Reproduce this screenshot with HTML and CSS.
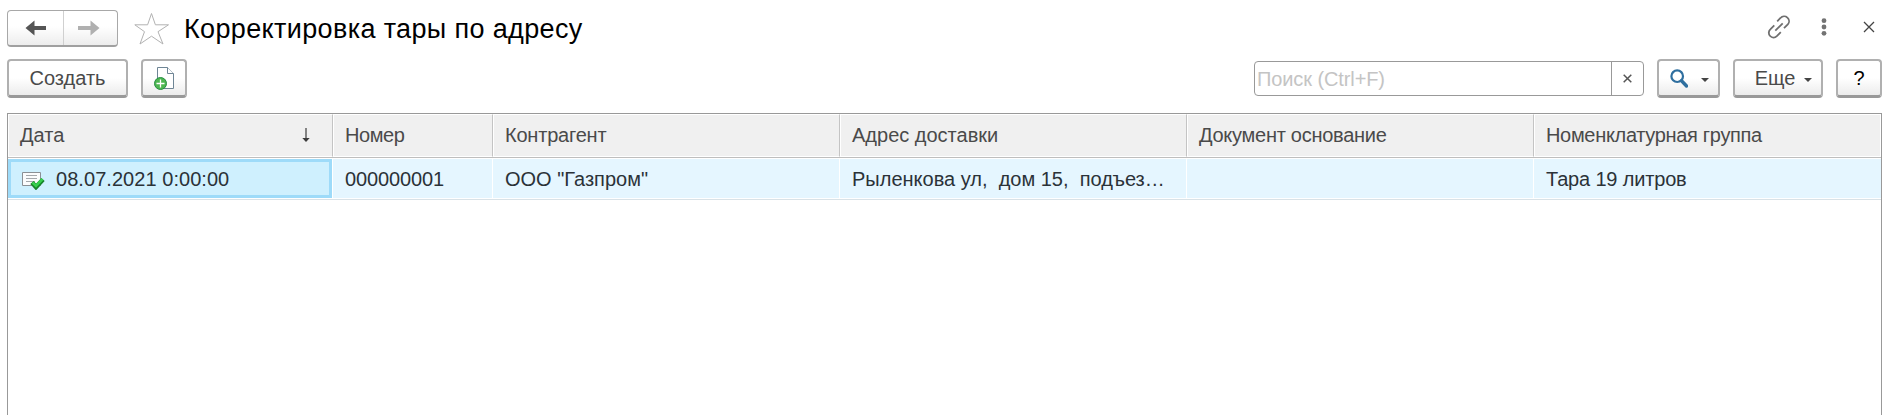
FILE: index.html
```html
<!DOCTYPE html>
<html lang="ru">
<head>
<meta charset="utf-8">
<title>Корректировка тары по адресу</title>
<link rel="stylesheet" href="styles.css">
</head>
<body>
<main class="window">
  <header class="titlebar">
    <div class="nav">
      <button class="nav-btn nav-prev" aria-label="Назад"><svg width="22" height="16" viewBox="0 0 22 16"><path d="M0.500 8 9.500 .5V6H21v4H9.500V15.500Z" fill="#555"/></svg></button>
      <button class="nav-btn nav-next" aria-label="Вперед"><svg width="22" height="16" viewBox="0 0 22 16"><path d="M21.500 8 12.500 .5V6H0v4H12.500V15.500Z" fill="#b0b0b0"/></svg></button>
    </div>
    <svg class="star" width="36" height="34" viewBox="0 0 36 34"><path d="M17.500 1.500 21.400 12.800H34.500L24 19.700 29 32 17.500 24.200 6 32 10.500 19.700.8 12.800H13.600Z" fill="#fff" stroke="#b2b2b2"/></svg>
    <h1 class="title">Корректировка тары по адресу</h1>
    <div class="window-tools">
      <svg class="link" width="24" height="24" viewBox="0 0 24 24" fill="none" stroke="#6f6f6f" stroke-width="1.800"><path d="M10.200 6.300 13.500 3A4.700 4.700 0 0 1 20.800 9.500L17 13.200M7.300 10.300 3.300 14.300A4.700 4.700 0 0 0 9.800 21.200L13.800 17.200M8.300 15.700 15.700 8.300"/></svg>
      <svg class="dots" width="6" height="18" viewBox="0 0 6 18" fill="#737373"><circle cx="3" cy="2.700" r="2.400"/><circle cx="3" cy="9" r="2.400"/><circle cx="3" cy="15.300" r="2.400"/></svg>
      <svg class="close" width="12" height="12" viewBox="0 0 12 12" stroke="#444" stroke-width="1.300"><path d="M1 1 11 11M11 1 1 11"/></svg>
    </div>
  </header>
  <div class="toolbar">
    <button class="btn create">Создать</button>
    <button class="btn copy" aria-label="Скопировать"><svg width="22" height="24" viewBox="0 0 22 24"><path d="M4.500 1.500H14.500L20.500 7.500V22.500H4.500Z" fill="#fff" stroke="#6e8595"/><path d="M14.500 1.500V7.500H20.500" fill="#fff" stroke="#6e8595"/><circle cx="7.500" cy="17.500" r="6" fill="#4db651" stroke="#268f42"/><path d="M7.500 13.500V21.500M3.500 17.500H11.500" stroke="#fff" stroke-width="1.300"/></svg></button>
    <div class="search">
      <span class="search-input">Поиск (Ctrl+F)</span>
      <span class="search-clear"><svg width="9" height="9" viewBox="0 0 9 9" stroke="#555" stroke-width="1.500"><path d="M.7.7 8.300 8.300M8.300.7.7 8.300"/></svg></span>
    </div>
    <button class="btn find" aria-label="Найти"><svg width="18" height="19" viewBox="0 0 18 19" fill="none" stroke="#2f6f9f"><circle cx="7.200" cy="7.200" r="5.800" stroke-width="2.200"/><path d="M11.500 11.800 16.500 17" stroke-width="3.400" stroke-linecap="round"/></svg><i class="caret"></i></button>
    <button class="btn more"><span>Еще</span><i class="caret"></i></button>
    <button class="btn help">?</button>
  </div>
  <section class="grid">
    <div class="row head">
      <div class="cell"><span>Дата</span><svg class="sort" width="8" height="15" viewBox="0 0 8 15"><path d="M4 0V12" stroke="#3c3c3c" stroke-width="1.200"/><path d="M.3 10H7.700L4 14Z" fill="#3c3c3c"/></svg></div>
      <div class="cell h-num"><span>Номер</span></div>
      <div class="cell h-org"><span>Контрагент</span></div>
      <div class="cell"><span>Адрес доставки</span></div>
      <div class="cell h-base"><span>Документ основание</span></div>
      <div class="cell h-group"><span>Номенклатурная группа</span></div>
    </div>
    <div class="row data">
      <div class="cell active"><svg class="doc" width="23" height="19" viewBox="0 0 23 19"><path d="M.5 1.500H18.500V14.500H.5Z" fill="#fbfcfd" stroke="#8b9095"/><path d="M4 4.500H15M4 7.500H15M4 10.500H13" stroke="#a4a8ac"/><path d="M10 11.500 14 16 21 8.500" fill="none" stroke="#16842a" stroke-width="4.600"/><path d="M10.500 11.500 14 15 20.500 8" fill="none" stroke="#35cf4d" stroke-width="2.600"/></svg><span class="v-date">08.07.2021 0:00:00</span></div>
      <div class="cell v-num"><span>000000001</span></div>
      <div class="cell"><span>ООО "Газпром"</span></div>
      <div class="cell"><span>Рыленкова ул,&nbsp; дом 15,&nbsp; подъез…</span></div>
      <div class="cell"></div>
      <div class="cell v-group"><span>Тара 19 литров</span></div>
    </div>
  </section>
</main>
</body>
</html>
```
FILE: styles.css
```css
* { box-sizing: border-box; }
body { margin: 0; background: #fff; font-family: "Liberation Sans", Arial, sans-serif; font-size: 20px; color: #4a4a4a; overflow: hidden; }
button { font: inherit; color: inherit; padding: 0; margin: 0; }
svg { display: block; flex: none; }
.window { height: 415px; padding: 10px 15px 0 7px; display: flex; flex-direction: column; }
.titlebar { display: flex; height: 36px; align-items: flex-start; flex: none; }
.nav { display: flex; width: 111px; height: 37px; border: 1px solid #a8a8a8; border-bottom: 2px solid #a0a0a0; border-radius: 4px; background: linear-gradient(#fff 45%, #ededed); }
.nav-btn { flex: 1; border: 0; background: none; display: flex; align-items: center; justify-content: center; }
.nav-prev { flex: 0 0 55px; }
.nav-next { border-left: 1px solid #d0d0d0; padding-right: 4px; }
.star { margin: 2px 0 0 16px; }
.title { margin: 3px 0 0 14px; font-size: 27px; letter-spacing: 0.36px; font-weight: 400; line-height: 32px; color: #000; white-space: nowrap; }
.window-tools { margin-left: auto; display: flex; align-items: center; height: 34px; padding-right: 7px; }
.dots { margin-left: 30px; }
.close { margin-left: 36px; }
.toolbar { display: flex; margin-top: 13px; height: 39px; flex: none; }
.btn { display: flex; align-items: center; justify-content: center; height: 39px; border: 2px solid #b0b0b0; border-bottom: 3px solid #999; border-radius: 4px; background: linear-gradient(#fff 50%, #ececec); }
.create { width: 121px; }
.copy { width: 46px; margin-left: 13px; }
.search { display: flex; margin: 2px 0 0 auto; width: 390px; height: 35px; border: 1px solid #999; border-radius: 4px; }
.search-input { flex: 1; color: #c4c4c4; line-height: 34px; padding-left: 2px; white-space: nowrap; letter-spacing: -0.1px; }
.search-clear { width: 32px; border-left: 1px solid #999; display: flex; align-items: center; justify-content: center; }
.caret { border: 4px solid transparent; border-top-color: #444; border-bottom: 0; }
.find { width: 63px; margin-left: 13px; gap: 13px; padding-left: 2px; }
.find .caret, .more .caret { margin-top: 3px; }
.more { width: 90px; margin-left: 13px; padding-left: 11px; gap: 9px; }
.help { width: 46px; margin-left: 13px; color: #000; }
.grid { margin-top: 15px; flex: 1; border: 1px solid #999; border-bottom: 0; }
.row { display: grid; grid-template-columns: 325px 160px 347px 347px 347px 1fr; }
.cell { display: flex; align-items: center; white-space: nowrap; overflow: hidden; }
.head { height: 44px; border-bottom: 1px solid #bebebe; }
.head .cell { background: #f0f0f0; border: 1px solid #fff; border-right-color: #c4c4c4; padding: 0 0 1px 11px; }
.head .cell:last-child { border-right-color: #fff; }
.h-num { letter-spacing: -0.4px; }
.h-org { letter-spacing: -0.2px; }
.h-base { letter-spacing: -0.27px; }
.h-group { letter-spacing: -0.32px; }
.sort { margin: 1px 22px 0 auto; }
.data { height: 42px; color: #2b3238; border-bottom: 1px solid #d9e2e7; }
.data .cell { background: #e5f6ff; border: 1px solid #fff; border-left: 0; padding: 1px 0 0 12px; }
.data .cell:last-child { border-right: 0; }
.data .active { background: #cff0fe; border: 3px solid #9edbf9; margin: 1px 1px 1px 0; padding-left: 11px; }
.v-date { letter-spacing: 0.05px; }
.v-num { letter-spacing: -0.12px; }
.v-group { letter-spacing: -0.17px; }
.doc { margin-right: 11px; margin-top: 2px; }
```
